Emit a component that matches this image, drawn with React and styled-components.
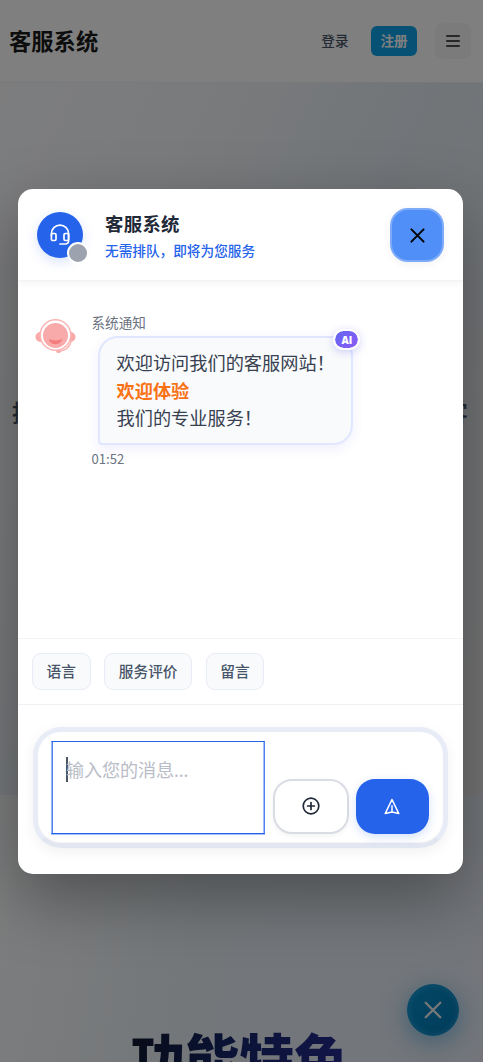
import React from 'react';
import styled, { createGlobalStyle } from 'styled-components';

const GlobalStyle = createGlobalStyle`
  * {
    box-sizing: border-box;
  }

  body {
    margin: 0;
    font-family: 'Noto Sans', 'Noto Sans CJK SC', sans-serif;
  }

  button {
    font-family: inherit;
    padding: 0;
    cursor: pointer;
  }
`;

const Page = styled.div`
  position: relative;
  height: 1062px;
  overflow: hidden;
  background: #fff;
`;

const Nav = styled.header`
  display: flex;
  align-items: center;
  height: 83px;
  padding: 0 12px 0 9px;
  background: #fff;
  border-bottom: 1px solid #eef0f3;
`;

const Brand = styled.div`
  flex: 1;
  padding-bottom: 2px;
  color: #1a1a1a;
  font-size: 22.3px;
  font-weight: 700;
`;

const LoginLink = styled.a`
  margin-right: 22.5px;
  padding-bottom: 2px;
  color: #475569;
  font-size: 13.6px;
  font-weight: 500;
`;

const RegisterButton = styled.button`
  width: 46px;
  height: 30px;
  margin-right: 18px;
  padding-bottom: 2px;
  border: none;
  border-radius: 6px;
  background: #0ea5e9;
  color: #fff;
  font-size: 13.6px;
  font-weight: 700;
`;

const MenuButton = styled.button`
  display: flex;
  align-items: center;
  justify-content: center;
  width: 36px;
  height: 36px;
  border: none;
  border-radius: 8px;
  background: #f6f6f7;
  color: #1a1a1a;
`;

const Hero = styled.section`
  height: 712px;
  padding-top: 312px;
  background: linear-gradient(115deg, #fafbfd 0%, #f4f6f9 25%, #e2eaf1 55%, #e9e8e8 100%);
`;

const HeroText = styled.p`
  margin: 0;
  padding-right: 3px;
  color: #475569;
  font-size: 24px;
  font-weight: 500;
  line-height: 36px;
  text-align: center;
  white-space: nowrap;
`;

const Features = styled.section`
  height: 267px;
  padding-top: 227px;
  background: linear-gradient(100deg, #fafbfc 0%, #e6eef4 45%, #e6ebf5 100%);
`;

const FeaturesTitle = styled.h2`
  margin: 0;
  background: linear-gradient(100deg, #0f172a 25%, #16276e 48%, #252c92 72%);
  background-clip: text;
  -webkit-background-clip: text;
  color: transparent;
  font-size: 54.4px;
  font-weight: 800;
  line-height: 74px;
  text-align: center;
  padding-right: 4px;
`;

const FloatingButton = styled.button`
  position: absolute;
  right: 24px;
  bottom: 26px;
  display: flex;
  align-items: center;
  justify-content: center;
  width: 52px;
  height: 52px;
  border: 1px solid #0a93cf;
  border-radius: 50%;
  background: linear-gradient(135deg, #0590cc, #0277b5);
  box-shadow: 0 6px 24px rgba(14, 140, 210, 0.5), inset 0 0 6px rgba(120, 210, 255, 0.35);
  color: #f0f0f0;
`;

const Overlay = styled.div`
  position: absolute;
  inset: 0;
  display: flex;
  align-items: flex-start;
  padding: 189px 20px 0 18px;
  background: rgba(0, 0, 0, 0.5);
`;

const Modal = styled.div`
  display: flex;
  flex-direction: column;
  width: 445px;
  height: 684.5px;
  border-radius: 15px;
  overflow: hidden;
  background: #fff;
  box-shadow: 0 24px 64px rgba(0, 0, 0, 0.34);
`;

const ModalHeader = styled.div`
  display: flex;
  align-items: center;
  height: 91.5px;
  flex-shrink: 0;
  padding: 2px 19px 0 18.5px;
  border-bottom: 1px solid #f3f4f6;
  box-shadow: 0 2px 8px rgba(0, 0, 0, 0.05);
`;

const Logo = styled.div`
  position: relative;
  display: flex;
  align-items: center;
  justify-content: center;
  width: 46px;
  height: 46px;
  margin-right: 22.5px;
  border-radius: 50%;
  background: #2563eb;
  box-shadow: 0 4px 12px rgba(37, 99, 235, 0.18);
  color: #fff;
`;

const StatusDot = styled.span`
  position: absolute;
  right: -6px;
  bottom: -6px;
  width: 22px;
  height: 22px;
  border: 2px solid #fff;
  border-radius: 50%;
  background: #9ca3af;
`;

const HeaderText = styled.div`
  flex: 1;
  padding-top: 2px;
`;

const Title = styled.div`
  color: #1f2937;
  font-size: 18.4px;
  font-weight: 700;
  line-height: 28px;
  letter-spacing: 0.3px;
`;

const Subtitle = styled.div`
  color: #2563eb;
  font-size: 13.65px;
  font-weight: 500;
  line-height: 25px;
`;

const CloseButton = styled.button`
  display: flex;
  align-items: center;
  justify-content: center;
  width: 54px;
  height: 54px;
  border: 2px solid #7dabfa;
  border-radius: 18px;
  background: #4f8ff7;
  box-shadow: 0 2px 8px rgba(0, 0, 0, 0.06);
  color: #000;
`;

const Messages = styled.div`
  display: flex;
  flex: 1;
  padding: 32px 17px 0 16px;
`;

const Avatar = styled.div`
  width: 41px;
  height: 41px;
  margin: 4px 16px 0 0.5px;
`;

const Sender = styled.div`
  color: #6b7280;
  font-size: 13.6px;
  line-height: 20px;
`;

const Bubble = styled.div`
  position: relative;
  margin: 3px 0 0 6.5px;
  padding: 12.6px 16.5px 10.2px 16.5px;
  border: 2px solid #e0e7ff;
  border-radius: 20px 20px 20px 4px;
  background: #f9fafb;
  box-shadow: 0 4px 12px rgba(99, 102, 241, 0.1);
  color: #374151;
  font-size: 18.2px;
  line-height: 27.6px;
`;

const Highlight = styled.strong`
  color: #f97316;
  font-weight: 700;
`;

const AiBadge = styled.span`
  position: absolute;
  top: -9px;
  right: -9px;
  width: 27px;
  height: 21px;
  border: 2px solid #fff;
  border-radius: 11px;
  background: linear-gradient(135deg, #6366f1, #8b5cf6);
  background-clip: padding-box;
  box-shadow: 0 2px 8px rgba(99, 102, 241, 0.3);
  color: #fff;
  font-family: 'Open Sans', sans-serif;
  font-size: 10px;
  font-weight: 800;
  line-height: 19px;
  text-align: center;
`;

const Time = styled.div`
  margin-top: 4px;
  color: #6b7280;
  font-family: 'Noto Sans CJK SC', sans-serif;
  font-size: 13.1px;
  line-height: 19px;
`;

const QuickActions = styled.div`
  display: flex;
  gap: 13.6px;
  height: 66px;
  flex-shrink: 0;
  padding: 14px;
  border-top: 1px solid #f3f4f6;
`;

const Chip = styled.button`
  height: 37px;
  padding: 0 13.6px 3px;
  border: 1px solid #e8ecf4;
  border-radius: 9px;
  background: #f9fafc;
  color: #475569;
  font-size: 14.7px;
  font-weight: 500;
`;

const Footer = styled.div`
  height: 169.5px;
  flex-shrink: 0;
  padding: 22px 15.5px 0 15px;
  border-top: 1px solid #eef0f4;
`;

const Composer = styled.div`
  display: flex;
  align-items: flex-end;
  height: 120.5px;
  padding: 8px 13px 9px 13px;
  border: 5px solid #e7ecf6;
  border-bottom-color: #e1e6f1;
  border-radius: 28px;
  background: #fff;
  box-shadow: 0 4px 14px rgba(0, 0, 0, 0.06), inset 0 -1px 1px rgba(0, 0, 0, 0.05);
`;

const MessageField = styled.div`
  display: flex;
  align-items: flex-start;
  width: 214px;
  height: 93px;
  margin-right: 8px;
  padding: 15px 14px;
  border: 1px solid #2563eb;
  border-left-color: #9ab8f9;
  border-right-color: #4f82f0;
  box-shadow: 0 1px 0 #a3bef9, inset 1px 0 0 #4f82f0, inset -1px 0 0 #a3bef9;
`;

const Caret = styled.span`
  width: 2px;
  height: 25px;
  margin-right: -2px;
  background: #4b5563;
`;

const Placeholder = styled.span`
  color: #b9bdc7;
  font-size: 18.1px;
  line-height: 26px;
  letter-spacing: -0.1px;
`;

const ActionButton = styled.button`
  display: flex;
  align-items: center;
  justify-content: center;
  width: ${(props) => (props.$primary ? '73.5px' : '76px')};
  height: ${(props) => (props.$primary ? '55px' : '54.5px')};
  margin-right: ${(props) => (props.$primary ? '0' : '6.5px')};
  border: ${(props) => (props.$primary ? 'none' : '2px solid #d9dce3')};
  border-radius: 19px;
  background: ${(props) => (props.$primary ? '#2563eb' : '#fff')};
  color: ${(props) => (props.$primary ? '#fff' : '#1f2937')};
  box-shadow: ${(props) =>
    props.$primary ? '0 3px 10px rgba(37, 99, 235, 0.2)' : '0 2px 5px rgba(0, 0, 0, 0.05)'};
`;

const Cross = ({ size, width }) => (
  <svg width={size} height={size} viewBox="0 0 16 16" fill="none" stroke="currentColor" strokeWidth={width} strokeLinecap="round">
    <path d="M1.5 1.5l13 13M14.5 1.5l-13 13" />
  </svg>
);

const MenuIcon = () => (
  <svg width="14" height="12" viewBox="0 0 14 12" stroke="currentColor" strokeWidth="1.6" strokeLinecap="round">
    <path d="M.8 1h12.4M.8 6h12.4M.8 11h12.4" />
  </svg>
);

const HeadsetIcon = () => (
  <svg width="22" height="22" viewBox="0 0 22 22" fill="none" stroke="currentColor" strokeWidth="1.7">
    <path d="M2.4 11V9.8a8.6 8.6 0 0 1 17.2 0V17a3 3 0 0 1-3 3H11" strokeLinecap="round" />
    <rect x="2.4" y="9.5" width="4.6" height="7" rx="1.3" />
    <rect x="15" y="9.5" width="4.6" height="7" rx="1.3" />
  </svg>
);

const AgentFace = () => (
  <svg width="41" height="41" viewBox="0 0 41 41">
    <path d="M7 14.5C3 14.5.5 17 .5 20S3 25 7 25zM34 14.5c4 0 6.5 2.5 6.5 5.5S38 25 34 25z" fill="#faa9a9" />
    <circle cx="20.5" cy="18" r="15.3" fill="#fff" stroke="#fbb4b4" strokeWidth="1.5" />
    <circle cx="20.5" cy="18.5" r="12.5" fill="#f8a9a9" />
    <path d="M13.8 21.8c3.8 2.2 9.6 2.2 13.4 0-1 3.800-3.5 5.400-6.7 5.400s-5.700-1.600-6.700-5.400z" fill="#f47c7c" />
    <path d="M36 25c-1.5 5-6 8.3-11.5 9.300" fill="none" stroke="#fbb4b4" strokeWidth="1.5" />
    <ellipse cx="23.5" cy="34.5" rx="2.2" ry="1.5" fill="#f8a9a9" />
  </svg>
);

const PlusIcon = () => (
  <svg width="18" height="18" viewBox="0 0 18 18" fill="none" stroke="currentColor" strokeWidth="1.7">
    <circle cx="9" cy="9" r="7.8" />
    <path d="M9 5.600v6.800M5.600 9h6.800" strokeLinecap="round" />
  </svg>
);

const SendIcon = () => (
  <svg width="16" height="17" viewBox="0 0 16 17" fill="none" stroke="currentColor" strokeWidth="1.5" strokeLinejoin="round">
    <path d="M8 1.5L1.2 15.6 8 13.900l6.800 1.700zM8 7.200v6.700" />
  </svg>
);

const quickActions = ['语言', '服务评价', '留言'];

function ChatModal() {
  return (
    <Modal>
      <ModalHeader>
        <Logo>
          <HeadsetIcon />
          <StatusDot />
        </Logo>
        <HeaderText>
          <Title>客服系统</Title>
          <Subtitle>无需排队，即将为您服务</Subtitle>
        </HeaderText>
        <CloseButton aria-label="close">
          <Cross size={15} width={2.1} />
        </CloseButton>
      </ModalHeader>
      <Messages>
        <Avatar>
          <AgentFace />
        </Avatar>
        <div>
          <Sender>系统通知</Sender>
          <Bubble>
            欢迎访问我们的客服网站！
            <br />
            <Highlight>欢迎体验</Highlight>
            <br />
            我们的专业服务！
            <AiBadge>AI</AiBadge>
          </Bubble>
          <Time>01:52</Time>
        </div>
      </Messages>
      <QuickActions>
        {quickActions.map((label) => (
          <Chip key={label}>{label}</Chip>
        ))}
      </QuickActions>
      <Footer>
        <Composer>
          <MessageField>
            <Caret />
            <Placeholder>输入您的消息...</Placeholder>
          </MessageField>
          <ActionButton aria-label="attach">
            <PlusIcon />
          </ActionButton>
          <ActionButton $primary aria-label="send">
            <SendIcon />
          </ActionButton>
        </Composer>
      </Footer>
    </Modal>
  );
}

function App() {
  return (
    <Page>
      <GlobalStyle />
      <Nav>
        <Brand>客服系统</Brand>
        <LoginLink>登录</LoginLink>
        <RegisterButton>注册</RegisterButton>
        <MenuButton aria-label="menu">
          <MenuIcon />
        </MenuButton>
      </Nav>
      <Hero>
        <HeroText>提升企业服务效率与客户满意度智能在线客</HeroText>
      </Hero>
      <Features>
        <FeaturesTitle>功能特色</FeaturesTitle>
      </Features>
      <FloatingButton aria-label="toggle chat">
        <Cross size={18} width={2} />
      </FloatingButton>
      <Overlay>
        <ChatModal />
      </Overlay>
    </Page>
  );
}

export default App;
